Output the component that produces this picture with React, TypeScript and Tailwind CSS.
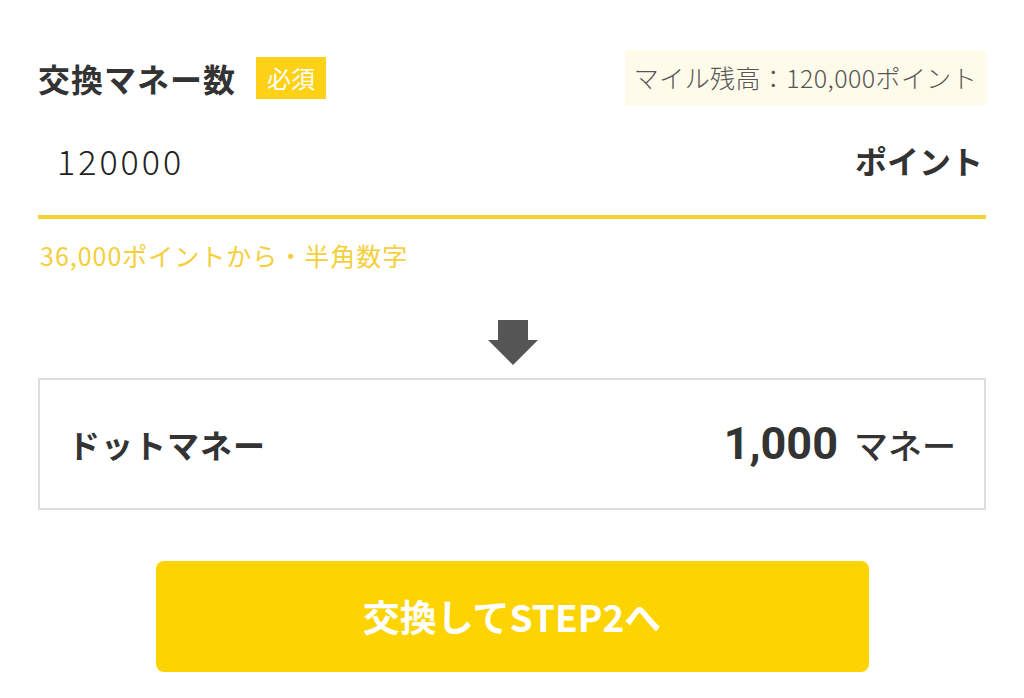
const jp = "font-['Noto_Sans_CJK_JP','Noto_Sans',sans-serif]";

export default function App() {
    return (
        <div className={`min-h-screen bg-white px-[38px] pt-[50px] ${jp}`}>
            {/* Header */}
            <div className="flex h-[55px] items-center justify-between">
                <div className="flex items-center gap-[20px]">
                    <h2 className="text-[32px] font-bold leading-none tracking-[1px] text-[#333333]">交換マネー数</h2>
                    <span className="flex h-[42px] items-center bg-[#fcd116] px-[11px] text-[24px] leading-none text-white">必須</span>
                </div>
                <div className="flex h-[55px] w-[361px] items-center justify-center bg-[#fffbeb] text-[25px] font-light tracking-[0.4px] text-[#555555]">
                    マイル残高：120,000ポイント
                </div>
            </div>

            {/* Input */}
            <div className="flex h-[110px] items-center justify-between pl-[19px] pr-[3px]">
                <span className="text-[34px] font-light tracking-[3px] text-[#222222]">120000</span>
                <span className="text-[32px] font-bold text-[#333333]">ポイント</span>
            </div>
            <div className="h-[4px] bg-[#f8d12c]" />
            <p className="mt-[18px] pl-[2px] text-[25px] leading-[36px] tracking-[1px] text-[#f5cf3a]">36,000ポイントから・半角数字</p>

            {/* Arrow */}
            <div className="mt-[47px] flex justify-center">
                <svg width="50" height="45" viewBox="0 0 50 45" className="ml-[2px]">
                    <path d="M10 0 H40 V20 H50 L25 45 L0 20 H10 Z" fill="#555555" />
                </svg>
            </div>

            {/* Result */}
            <div className="mt-[13px] flex h-[132px] items-center justify-between border-2 border-[#dddddd] pl-[28px] pr-[28px]">
                <span className="text-[32px] font-bold tracking-[1px] text-[#333333]">ドットマネー</span>
                <div className="flex items-baseline gap-[16px] text-[#333333]">
                    <span className="font-['Roboto',sans-serif] text-[45px] font-bold">1,000</span>
                    <span className="text-[34px] font-medium">マネー</span>
                </div>
            </div>

            {/* Button */}
            <div className="mt-[51px] flex justify-center">
                <button className="flex h-[111px] w-[713px] items-center justify-center rounded-[8px] bg-[#fdd400] text-[37px] font-bold text-white">
                    交換してSTEP2へ
                </button>
            </div>
        </div>
    );
}
